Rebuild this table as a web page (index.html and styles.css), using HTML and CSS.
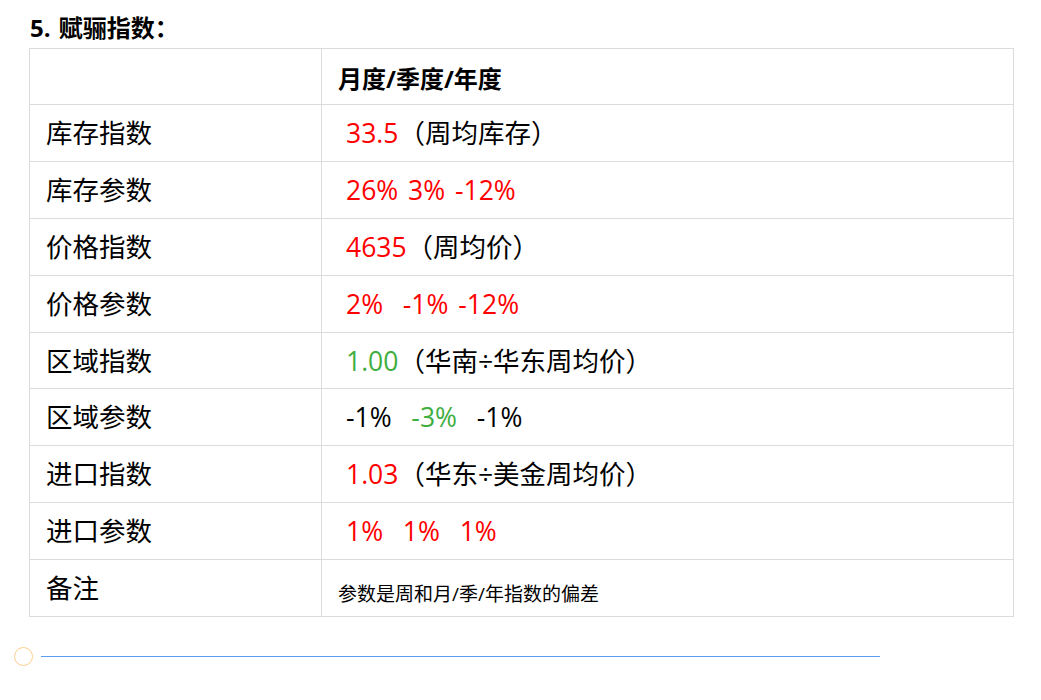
FILE: index.html
```html
<!DOCTYPE html>
<html lang="zh">
<head>
<meta charset="utf-8">
<link rel="stylesheet" href="styles.css">
</head>
<body>
<div class="page">
  <h3 class="title">5. 赋骊指数：</h3>
  <table class="grid">
    <colgroup><col class="c1"><col class="c2"></colgroup>
    <tr class="head"><td></td><td>月度/季度/年度</td></tr>
    <tr><td>库存指数</td><td class="val"><span class="red">33.5</span>（周均库存）</td></tr>
    <tr><td>库存参数</td><td class="val"><span class="red">26% 3% -12%</span></td></tr>
    <tr><td>价格指数</td><td class="val"><span class="red">4635</span>（周均价）</td></tr>
    <tr><td>价格参数</td><td class="val"><span class="red">2%&nbsp; -1% -12%</span></td></tr>
    <tr class="short"><td>区域指数</td><td class="val"><span class="green">1.00</span>（华南÷华东周均价）</td></tr>
    <tr><td>区域参数</td><td class="val">-1%&nbsp; <span class="green">-3%</span>&nbsp; -1%</td></tr>
    <tr><td>进口指数</td><td class="val"><span class="red">1.03</span>（华东÷美金周均价）</td></tr>
    <tr><td>进口参数</td><td class="val"><span class="red">1%&nbsp; 1%&nbsp; 1%</span></td></tr>
    <tr class="note"><td>备注</td><td><span class="small">参数是周和月/季/年指数的偏差</span></td></tr>
  </table>
  <div class="divider">
    <span class="dot"></span>
    <span class="line"></span>
  </div>
</div>
</body>
</html>
```
FILE: styles.css
```css
html, body {
  margin: 0;
  padding: 0;
  background: #fff;
}
body {
  font-family: "Open Sans", "Noto Sans CJK SC", sans-serif;
  color: #000;
}
.page {
  padding: 13px 0 0 29px;
  width: 985px;
}
.title {
  margin: 0 0 5px 1px;
  font-size: 24px;
  line-height: 30px;
  font-weight: bold;
  word-spacing: 2px;
}
.grid {
  border-collapse: separate;
  border-spacing: 0;
  border-top: 1px solid #dcdcdc;
  border-left: 1px solid #dcdcdc;
  width: 985px;
  table-layout: fixed;
}
.grid .c1 { width: 292px; }
.grid td {
  border-right: 1px solid #dcdcdc;
  border-bottom: 1px solid #dcdcdc;
  height: 57px;
  padding: 0 16px;
  font-size: 26.5px;
  line-height: 30px;
  vertical-align: middle;
  white-space: pre;
  box-sizing: border-box;
}
.grid .short td { height: 56px; }
.grid td.val {
  padding-left: 24px;
  word-spacing: 3px;
}
.grid .head td {
  height: 56px;
  font-size: 24px;
  font-weight: bold;
  padding-top: 4px;
}
.red { color: #ff0000; }
.green { color: #3fae3f; }
.small {
  font-size: 19px;
  position: relative;
  top: 4px;
}
.divider {
  display: flex;
  align-items: center;
  margin: 30px 0 0 -15px;
  height: 19px;
}
.dot {
  width: 19px;
  height: 19px;
  border: 1px solid #fdd08f;
  border-radius: 50%;
  box-sizing: border-box;
}
.line {
  margin-left: 8px;
  width: 839px;
  height: 1px;
  background: #5b9df2;
}
```
